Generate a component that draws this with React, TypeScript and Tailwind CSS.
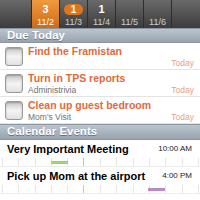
import React from 'react';

const days = [
  { n: '3', d: '11/2', active: true },
  { n: '1', d: '11/3', pill: true },
  { n: '1', d: '11/4' },
  { n: '', d: '11/5' },
  { n: '', d: '11/6' },
];

const tasks = [
  { title: 'Find the Framistan', sub: '' },
  { title: 'Turn in TPS reports', sub: 'Administrivia' },
  { title: 'Clean up guest bedroom', sub: "Mom's Visit" },
];

const events = [
  { title: 'Very Important Meeting', time: '10:00 AM', left: 51, color: 'bg-[#9ed46e]' },
  { title: 'Pick up Mom at the airport', time: '4:00 PM', left: 148, color: 'bg-[#b98bc4]' },
];

const ticks = [2, 18, 35, 51, 67, 83, 100, 116, 133, 149, 165, 182, 198];

function Checkbox() {
  return (
    <div className="w-[18px] h-[19px] shrink-0 rounded-[3px] border border-[#9a9a9a] bg-gradient-to-b from-[#c8c8c8] via-[#f4f4f4] to-[#e2e2e2] shadow-[inset_0_1px_2px_rgba(0,0,0,0.25)]" />
  );
}

function SectionHeader({ label, h }: { label: string; h: string }) {
  return (
    <div className={`${h} flex items-center px-[7px] bg-gradient-to-b from-[#bcc5ce] to-[#97a3af] border-y border-[#8a96a2] text-white text-[11.5px] font-bold leading-none [text-shadow:0_1px_0_rgba(0,0,0,0.35)]`}>
      {label}
    </div>
  );
}

export default function App() {
  return (
    <div className="w-[200px] h-[200px] overflow-hidden bg-white" style={{ fontFamily: '"Liberation Sans", Arial, sans-serif' }}>
      {/* Day strip */}
      <div className="h-[28px] flex bg-gradient-to-b from-[#6a6a6a] to-[#3c3c3c]">
        <div className="w-[32px] border-r border-[#2e2e2e]" />
        {days.map(day => (
          <div
            key={day.d}
            className={`w-[28px] shrink-0 flex flex-col items-center border-r border-[#2e2e2e] ${day.active ? 'bg-gradient-to-b from-[#f09a3e] to-[#cf6a12]' : ''}`}
          >
            <div className="h-[18px] flex items-center justify-center">
              {day.pill ? (
                <span className="h-[11px] w-[19px] rounded-full bg-[#e0761c] text-white text-[10px] font-bold leading-[11px] text-center">{day.n}</span>
              ) : (
                <span className="text-white text-[11px] font-bold leading-none">{day.n}</span>
              )}
            </div>
            <span className={`text-[9px] leading-none ${day.active ? 'text-white' : 'text-[#d0d0d0]'}`}>{day.d}</span>
          </div>
        ))}
        <div className="flex-1" />
      </div>

      <SectionHeader label="Due Today" h="h-[15px]" />

      {tasks.map(t => (
        <div key={t.title} className="h-[27px] flex items-center gap-[5px] pl-[5px] pr-[6px] border-b border-[#e4e4e4]">
          <Checkbox />
          <div className="flex-1 min-w-0 flex flex-col">
            <span className="text-[#e2693a] text-[10.5px] font-bold leading-[13px] truncate">{t.title}</span>
            <div className="flex items-end justify-between h-[10px]">
              <span className="text-[#707070] text-[8.5px] leading-none">{t.sub}</span>
              <span className="text-[#eba07e] text-[8.5px] leading-none">Today</span>
            </div>
          </div>
        </div>
      ))}

      <SectionHeader label="Calendar Events" h="h-[16px]" />

      {events.map(e => (
        <div key={e.title} className="h-[27px] flex flex-col border-b border-[#ececec]">
          <div className="flex items-center justify-between pl-[7px] pr-[8px] h-[18px]">
            <span className="text-black text-[11px] font-bold leading-none whitespace-nowrap">{e.title}</span>
            <span className="text-[#222] text-[8px] leading-none whitespace-nowrap">{e.time}</span>
          </div>
          <div className="relative h-[8px]">
            {ticks.map((x, i) => (
              <div key={i} className={`absolute top-0 bottom-0 w-px ${x === 83 ? 'bg-[#c4c4c4]' : 'bg-[#e6e6e6]'}`} style={{ left: x }} />
            ))}
            <div className={`absolute top-[3px] h-[3px] w-[17px] ${e.color}`} style={{ left: e.left }} />
          </div>
        </div>
      ))}
    </div>
  );
}
